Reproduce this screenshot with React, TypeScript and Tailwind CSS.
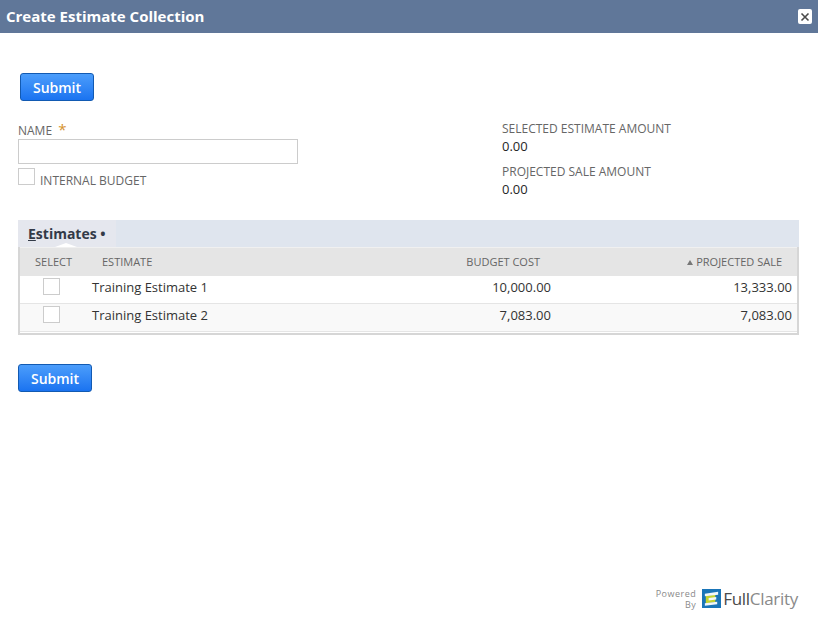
const font = "font-['Open_Sans',sans-serif]";

const rows = [
  { name: "Training Estimate 1", cost: "10,000.00", sale: "13,333.00", stripe: "bg-white" },
  { name: "Training Estimate 2", cost: "7,083.00", sale: "7,083.00", stripe: "bg-[#f9f9f9]" },
];

function SubmitButton() {
  return (
    <button className="w-[74px] h-[28px] pt-px rounded-[3px] border border-[#125ab2] bg-gradient-to-b from-[#4b9dfb] to-[#1a73f0] text-white text-[14px] font-semibold leading-none">
      Submit
    </button>
  );
}

function Checkbox() {
  return <div className="w-[17px] h-[17px] border border-[#cccccc] bg-white" />;
}

function Logo() {
  return (
    <svg width="19" height="19" viewBox="0 0 20 20">
      <rect width="20" height="20" fill="#1a75b8" />
      <path d="M4 7 L14 6 L14 14 L4 15 Z" fill="#c3d230" />
      <path d="M3 5 L17 3 L17 6 L3 7.5 Z" fill="#f2f7fa" />
      <path d="M7 9.5 L15 8.5 L15 11 L7 12 Z" fill="#f2f7fa" />
      <path d="M3 15 L16 13.5 L16 16 L3 17.5 Z" fill="#f2f7fa" />
    </svg>
  );
}

export default function App() {
  return (
    <div className={`${font} w-[818px] h-[630px] bg-white flex flex-col overflow-hidden`}>
      <div className="h-[33px] shrink-0 bg-[#607799] flex items-center justify-between pl-[6px] pr-[6px]">
        <h1 className="text-[15px] font-bold text-white">Create Estimate Collection</h1>
        <div className="w-[14px] h-[15px] rounded-[2px] bg-white flex items-center justify-center">
          <svg width="10" height="10" viewBox="0 0 10 10">
            <path d="M1.5 1.5 L8.5 8.5 M8.5 1.5 L1.5 8.5" stroke="#4a4a4a" strokeWidth="1.6" />
          </svg>
        </div>
      </div>

      <div className="flex-1 flex flex-col pl-[18px] pr-[19px]">
        <div className="pt-[40px] pl-[2px]">
          <SubmitButton />
        </div>

        <div className="mt-[18px] flex">
          <div className="w-[484px]">
            <div className="text-[12px] leading-[20px] text-[#666666] h-[20px]">
              NAME <span className="text-[#d5922e] text-[15px] ml-[3px]">*</span>
            </div>
            <div className="w-[280px] h-[25px] border border-[#cccccc] bg-white" />
            <div className="flex mt-[4px]">
              <Checkbox />
              <span className="ml-[5px] mt-[4px] text-[12px] leading-[17px] text-[#666666]">INTERNAL BUDGET</span>
            </div>
          </div>
          <div className="text-[12px] text-[#666666] pt-px">
            <div className="leading-[18px]">SELECTED ESTIMATE AMOUNT</div>
            <div className="text-[13px] leading-[17px] text-[#262626]">0.00</div>
            <div className="leading-[18px] mt-[8px]">PROJECTED SALE AMOUNT</div>
            <div className="text-[13px] leading-[17px] text-[#262626]">0.00</div>
          </div>
        </div>

        <div className="mt-[22px] h-[27px] bg-[#dfe5ee] flex relative">
          <div className="w-[98px] h-[27px] bg-[#e5e7ee] pl-[10px] text-[14px] font-bold leading-[27px] text-[#333a47]">
            <span className="underline">E</span>stimates <span className="text-[14px]">•</span>
          </div>
          <div className="absolute left-[37px] bottom-0 w-0 h-0 border-x-[11px] border-x-transparent border-b-[4px] border-b-white" />
        </div>

        <div className="border-x-2 border-b-2 border-[#d6d6d6] pb-[1px]">
          <div className="flex h-[29px] items-center bg-[#e5e5e5] text-[11px] text-[#666666] border-t border-[#f0f0f0]">
            <div className="w-[66px] pl-[15px]">SELECT</div>
            <div className="w-[290px] pl-[16px]">ESTIMATE</div>
            <div className="w-[164px] text-right">BUDGET COST</div>
            <div className="flex-1 flex items-center justify-end pr-[15px]">
              <span className="w-0 h-0 mr-[3px] border-x-[3px] border-x-transparent border-b-[5px] border-b-[#777777]" />
              PROJECTED SALE
            </div>
          </div>
          {rows.map((r) => (
            <div key={r.name} className={`flex h-[28px] pt-[2px] items-start border-b border-[#e5e5e5] text-[13px] leading-[18px] text-[#333333] ${r.stripe}`}>
              <div className="w-[66px] pl-[23px]">
                <Checkbox />
              </div>
              <div className="w-[290px] pl-[6px]">{r.name}</div>
              <div className="w-[175px] text-right">{r.cost}</div>
              <div className="flex-1 text-right pr-[5px]">{r.sale}</div>
            </div>
          ))}
        </div>

        <div className="mt-[29px]">
          <SubmitButton />
        </div>

        <div className="mt-auto mb-[21px] flex items-center justify-end">
          <div className="text-[9px] leading-[11px] text-[#8a8a8a] text-right tracking-[0.5px] mr-[6px] translate-y-[1px]">
            Powered
            <br />
            By
          </div>
          <Logo />
          <div className="ml-[2px] mr-px text-[17px] leading-none tracking-[-0.3px]">
            <span className="font-medium text-[#4a4a4a]">Full</span>
            <span className="text-[#8a8a8a]">Clarity</span>
          </div>
        </div>
      </div>
    </div>
  );
}
